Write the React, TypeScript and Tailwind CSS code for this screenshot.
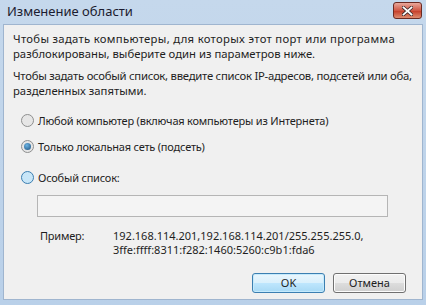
function Radio({ checked, hover }: { checked?: boolean; hover?: boolean }) {
  return (
    <span
      className={`relative inline-flex h-[13px] w-[13px] shrink-0 items-center justify-center rounded-full border ${
        hover ? "border-[#3c7fb1] bg-[#c8e6f8]" : "border-[#8e8f8f] bg-[#e6e6e6]"
      }`}
    >
      {checked && (
        <span className="h-[7px] w-[7px] rounded-full bg-[radial-gradient(circle_at_40%_35%,#6cb4e4,#1c4f7c)]" />
      )}
    </span>
  );
}

function App() {
  return (
    <div
      className="h-[305px] w-[426px] bg-[linear-gradient(180deg,#c5d8ec,#b9d0e9)] text-[12px] text-[#1e1e1e]"
      style={{ fontFamily: '"Noto Sans", "Liberation Sans", sans-serif' }}
    >
      <div className="flex h-[24px] items-center justify-between pl-[7px] pr-[4px]">
        <span className="text-[13px] text-[#1b1b2f]">Изменение области</span>
        <div className="mb-[3px] flex h-[17px] w-[29px] items-center justify-center rounded-[3px] border border-[#6b2a22] bg-[linear-gradient(180deg,#e9a99c,#d05744_50%,#c43a26_51%,#dd8c70)]">
          <svg width="11" height="10" viewBox="0 0 11 10">
            <path d="M1.5 1.5 L9.5 8.5 M9.5 1.5 L1.5 8.5" stroke="#3a2a2a" strokeWidth="3.4" strokeLinecap="square" />
            <path d="M1.5 1.5 L9.5 8.5 M9.5 1.5 L1.5 8.5" stroke="#ffffff" strokeWidth="1.8" strokeLinecap="square" />
          </svg>
        </div>
      </div>
      <div className="mx-[3px] flex h-[276px] flex-col border border-[#9fb5cf] bg-[#f0f0f0] px-[9px] pt-[6px] text-[11.3px]">
        <p className="whitespace-nowrap leading-[15px]">
          <span className="tracking-[0.3px]">Чтобы задать компьютеры, для которых этот порт или программа</span>
          <br />
          разблокированы, выберите один из параметров ниже.
        </p>
        <p className="mt-[7px] whitespace-nowrap leading-[15px]">
          <span className="tracking-[-0.25px]">Чтобы задать особый список, введите список IP-адресов, подсетей или оба,</span>
          <br />
          разделенных запятыми.
        </p>
        <div className="mt-[15px] flex flex-col gap-[11px] pl-[8px] text-[11px] leading-[15px] tracking-[-0.2px]">
          <label className="flex items-center gap-[4px]">
            <Radio />
            <span>Любой компьютер (включая компьютеры из Интернета)</span>
          </label>
          <label className="flex items-center gap-[4px]">
            <Radio checked />
            <span>Только локальная сеть (подсеть)</span>
          </label>
          <label className="mt-[5px] flex items-center gap-[4px]">
            <Radio hover />
            <span>Особый список:</span>
          </label>
        </div>
        <div className="ml-[24px] mt-[10px] h-[22px] w-[351px] border border-[#b5b5b5] bg-[#f4f4f4]" />
        <div className="mt-[12px] flex pl-[27px] text-[11px] leading-[14px]">
          <span className="w-[73px] shrink-0 tracking-[-0.2px]">Пример:</span>
          <span className="whitespace-nowrap">
            192.168.114.201,192.168.114.201/255.255.255.0,
            <br />
            3ffe:ffff:8311:f282:1460:5260:c9b1:fda6
          </span>
        </div>
        <div className="mt-auto mb-[6px] flex justify-end gap-[8px] pr-[7px]">
          <button className="h-[20px] w-[73px] rounded-[3px] border border-[#3c7fb1] bg-[linear-gradient(180deg,#eaf6fd,#d9f0fc_50%,#bee6fd_51%,#a7d9f5)] text-[11px] shadow-[inset_0_0_0_1px_#c5eafc]">
            OK
          </button>
          <button className="h-[20px] w-[73px] rounded-[3px] border border-[#707070] bg-[linear-gradient(180deg,#f2f2f2,#ebebeb_50%,#dddddd_51%,#cfcfcf)] text-[11px] shadow-[inset_0_0_0_1px_#fcfcfc]">
            Отмена
          </button>
        </div>
      </div>
    </div>
  );
}

export default App;
